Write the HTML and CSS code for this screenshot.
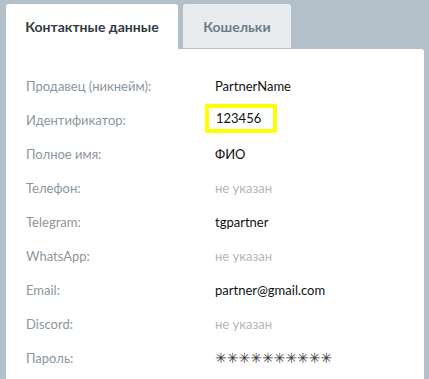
FILE: index.html
```html
<!DOCTYPE html>
<html lang="ru">
<head>
<meta charset="utf-8">
<link rel="stylesheet" href="styles.css">
</head>
<body>
<div class="page">
  <div class="tabs">
    <div class="tab tab-active">Контактные данные</div>
    <div class="tab tab-inactive">Кошельки</div>
  </div>
  <div class="card">
    <div class="row"><div class="label">Продавец (никнейм):</div><div class="value">PartnerName</div></div>
    <div class="row"><div class="label">Идентификатор:</div><div class="value"><span class="highlight">123456</span></div></div>
    <div class="row"><div class="label">Полное имя:</div><div class="value">ФИО</div></div>
    <div class="row"><div class="label">Телефон:</div><div class="value empty">не указан</div></div>
    <div class="row"><div class="label">Telegram:</div><div class="value">tgpartner</div></div>
    <div class="row"><div class="label">WhatsApp:</div><div class="value empty">не указан</div></div>
    <div class="row"><div class="label">Email:</div><div class="value">partner@gmail.com</div></div>
    <div class="row"><div class="label">Discord:</div><div class="value empty">не указан</div></div>
    <div class="row"><div class="label">Пароль:</div><div class="value password">✳✳✳✳✳✳✳✳✳✳</div></div>
  </div>
</div>
</body>
</html>
```

FILE: styles.css
```css
html, body {
  margin: 0;
  padding: 0;
  background: #b4c0c9;
  font-family: Lato, "Noto Sans", sans-serif;
  overflow: hidden;
}
.page {
  padding: 4px 5px 0 6px;
}
.tabs {
  display: flex;
  gap: 5px;
  align-items: flex-start;
}
.tab {
  height: 44px;
  display: flex;
  align-items: center;
  justify-content: center;
  font-weight: 700;
  font-size: 14px;
  border-radius: 3px 3px 0 0;
  box-sizing: border-box;
}
.tab-active {
  width: 172px;
  height: 45px;
  background: #ffffff;
  color: #333a40;
}
.tab-inactive {
  width: 108px;
  background: #e8ecef;
  color: #6d7b86;
}
.card {
  background: #ffffff;
  padding: 20px 20px 0 20px;
  border-radius: 0 3px 0 0;
  height: 330px;
  box-sizing: border-box;
}
.row {
  display: flex;
  align-items: center;
  height: 34px;
  font-size: 13px;
}
.label {
  width: 189px;
  color: #8c969e;
}
.value {
  color: #111111;
}
.value.empty {
  color: #b2b7bc;
}
.highlight {
  display: inline-block;
  margin-left: -10px;
  margin-top: -3px;
  padding: 2px 12px 3px 7px;
  border: 4px solid #ffff00;
  border-radius: 2px;
}
.password {
  font-family: "DejaVu Sans", sans-serif;
  font-size: 14px;
  color: #3a3a3a;
}
```
